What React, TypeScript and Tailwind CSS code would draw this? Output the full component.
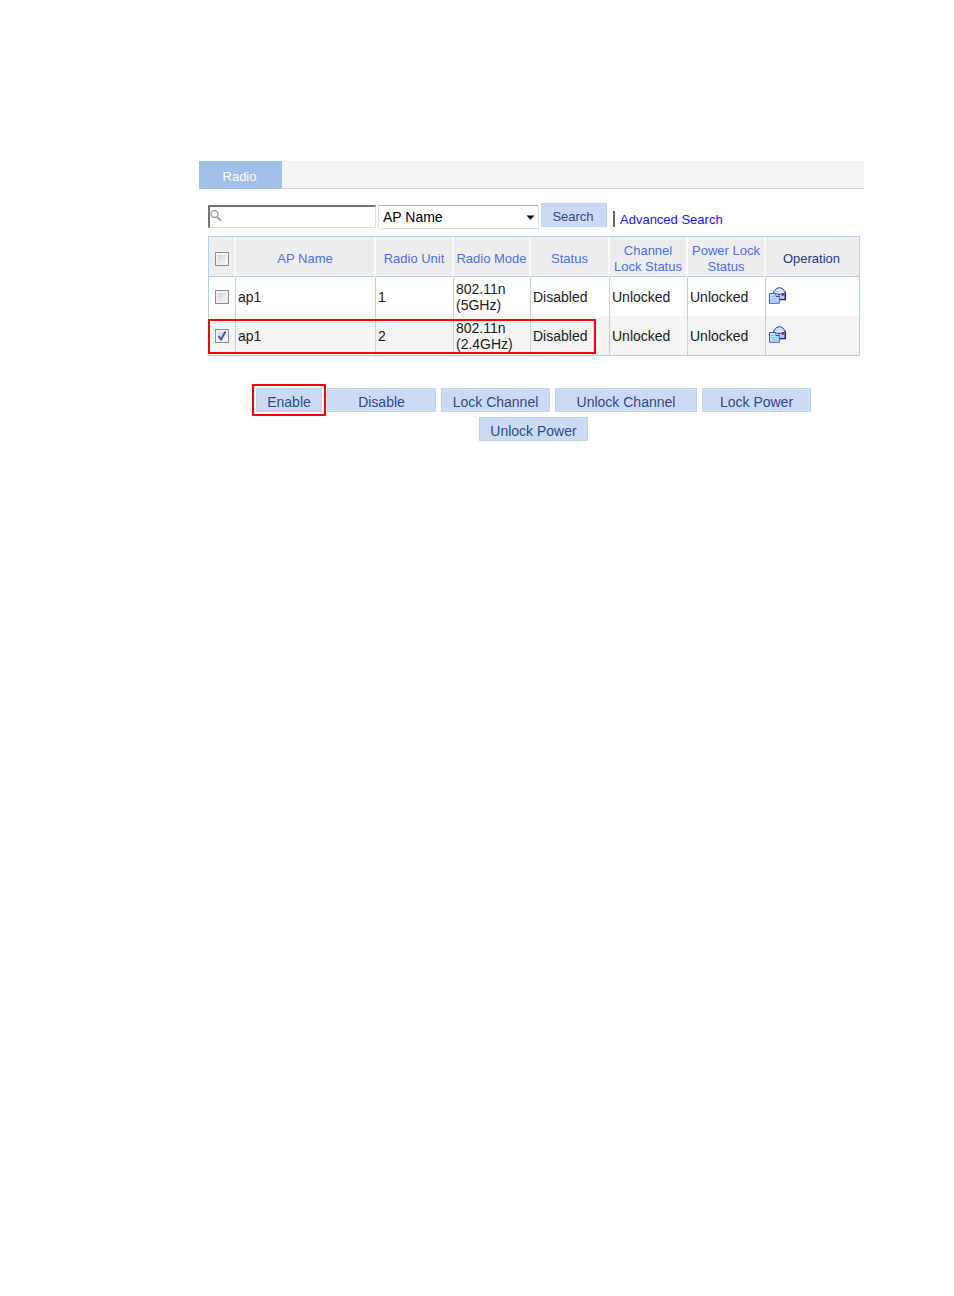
import React, { useState } from "react";

interface Radio {
  id: number;
  apName: string;
  unit: number;
  mode: string;
  band: string;
  status: string;
  channelLock: string;
  powerLock: string;
}

const radios: Radio[] = [
  {
    id: 1,
    apName: "ap1",
    unit: 1,
    mode: "802.11n",
    band: "(5GHz)",
    status: "Disabled",
    channelLock: "Unlocked",
    powerLock: "Unlocked",
  },
  {
    id: 2,
    apName: "ap1",
    unit: 2,
    mode: "802.11n",
    band: "(2.4GHz)",
    status: "Disabled",
    channelLock: "Unlocked",
    powerLock: "Unlocked",
  },
];

const actions = [
  { label: "Enable", width: "w-[66px]", marked: true },
  { label: "Disable", width: "w-[109px]" },
  { label: "Lock Channel", width: "w-[109px]" },
  { label: "Unlock Channel", width: "w-[142px]" },
  { label: "Lock Power", width: "w-[109px]" },
  { label: "Unlock Power", width: "w-[109px]" },
];

const SearchIcon = () => (
  <svg
    className="pointer-events-none absolute top-1 left-0.5"
    width="12"
    height="14"
    viewBox="0 0 12 14"
    fill="none"
    stroke="#a3a3a3"
  >
    <circle cx="4.5" cy="5" r="3.5" strokeWidth="1.4" />
    <path d="M7 7.8 L11 11.8" strokeWidth="2" />
  </svg>
);

// envelope with a sheet of paper in front of it
const OperationIcon = () => (
  <svg width="17" height="17" viewBox="0 0 17 17">
    <path
      d="M4.5 12.5 V5 L7.5 1.5 L10.5 0.6 L13.5 1.5 L16.3 5 V12.5 Z"
      fill="#a3cdf5"
      stroke="#3a48a8"
    />
    <path d="M16.3 5 V12.6 H10" fill="none" stroke="#241f80" strokeWidth="1.4" />
    <path d="M6 4.6 L8 2.4 L10.5 1.6 L13 2.4 L15 4.6 Z" fill="#d2eafa" />
    <path d="M6 5.5 H15" stroke="#e8f4ff" />
    <rect x="12.5" y="6" width="2.4" height="2.6" fill="#b0183c" />
    <path d="M7.5 7.5 H11.5" stroke="#2c3496" />
    <path
      d="M0.5 6.5 H7 L10.3 9.5 V16.3 H0.5 Z"
      fill="#c4e0fa"
      stroke="#4a5cb6"
    />
    <path d="M7 6.5 V9.5 H10.3" fill="#fff" stroke="#3a48a8" />
    <path d="M2 9.5 H5.5 M2 11.7 H8.5 M2 13.9 H8.5" stroke="#8bbcf0" />
  </svg>
);

interface CheckProps {
  label: string;
  checked: boolean;
  onChange: () => void;
}

const Check = ({ label, checked, onChange }: CheckProps) => (
  <span className="relative mx-auto block h-3.5 w-3.5">
    <input
      type="checkbox"
      aria-label={label}
      checked={checked}
      onChange={onChange}
      className="block h-3.5 w-3.5 appearance-none border border-[#8e8f8f] bg-linear-to-br from-[#c8ccd2] to-white shadow-[inset_0_0_0_2px_#f0f0f0]"
    />
    {checked && (
      <svg
        className="pointer-events-none absolute inset-0"
        width="14"
        height="14"
        viewBox="0 0 14 14"
        fill="none"
        stroke="#4257a0"
        strokeWidth="2"
      >
        <path d="M3.5 7 L6 10.5 L10.5 2.5" />
      </svg>
    )}
  </span>
);

const App = () => {
  const [query, setQuery] = useState("");
  const [field, setField] = useState("AP Name");
  const [selected, setSelected] = useState<number[]>([2]);

  const toggle = (id: number) =>
    setSelected(
      selected.includes(id)
        ? selected.filter((s) => s !== id)
        : [...selected, id],
    );
  const allSelected = selected.length === radios.length;
  const toggleAll = () =>
    setSelected(allSelected ? [] : radios.map((r) => r.id));

  const head =
    "border-r-2 border-b border-r-[#fafafa] border-b-[#b4cdec] p-0 pt-1 font-normal";
  const cell = "border-r border-[#cfcfcf] px-0.5 py-0";

  return (
    <div className="min-h-screen bg-white pt-[161px] pr-[90px] pl-[199px] font-['Liberation_Sans',Arial,sans-serif] text-[13px] leading-4 text-[#1a1a1a]">
      <div className="flex h-7 border-b border-[#d2d2d2] bg-[#f4f4f4]">
        <button className="-mb-px w-[83px] bg-[#a2bfe8] pt-1 pr-0.5 text-white">
          Radio
        </button>
      </div>

      <div className="pr-1 pl-[9px]">
        {/* Search bar */}
        <div className="mt-3.5 flex h-[25px] items-start">
          <div className="relative mt-0.5">
            <SearchIcon />
            <input
              type="text"
              aria-label="Search text"
              value={query}
              onChange={(e) => setQuery(e.target.value)}
              className="block h-[23px] w-[168px] border border-t-2 border-l-2 border-[#dedede] border-t-[#747474] border-l-[#747474] pl-4 outline-none"
            />
          </div>
          <div className="relative mt-0.5 ml-0.5">
            <select
              aria-label="Search field"
              value={field}
              onChange={(e) => setField(e.target.value)}
              className="block h-6 w-[161px] appearance-none rounded-xs border border-[#dcdcdc] border-t-[#ababab] bg-white pl-1 text-sm text-black outline-none"
            >
              <option>AP Name</option>
              <option>Radio Unit</option>
              <option>Radio Mode</option>
              <option>Status</option>
            </select>
            <svg
              className="pointer-events-none absolute top-2.5 right-1"
              width="9"
              height="5"
              viewBox="0 0 9 5"
            >
              <path d="M0.5 0.5 H8.5 L4.5 4.8 Z" fill="#000" />
            </svg>
          </div>
          <button className="ml-0.5 h-6 w-[66px] border border-[#bdd3f0] bg-[#ccdaf3] pt-1 pr-0.5 text-[#2f4a8c]">
            Search
          </button>
          <span className="mt-2 ml-1.5 h-4 w-0.5 bg-[#686070]" />
          <a href="#" className="mt-[9px] ml-[5px] text-[#1a12f0]">
            Advanced Search
          </a>
        </div>

        {/* Radio list */}
        <div className="relative mt-2">
          <table className="w-full table-fixed border-separate border-spacing-0 border border-[#b4cdec]">
            <colgroup>
              <col className="w-[27px]" />
              <col />
              <col className="w-[78px]" />
              <col className="w-[77px]" />
              <col className="w-[79px]" />
              <col className="w-[78px]" />
              <col className="w-[78px]" />
              <col className="w-[93px]" />
            </colgroup>
            <thead>
              <tr className="h-10 bg-[#ededed] text-[#4a70ec]">
                <th className={head}>
                  <Check
                    label="Select all"
                    checked={allSelected}
                    onChange={toggleAll}
                  />
                </th>
                <th className={head}>AP Name</th>
                <th className={head}>Radio Unit</th>
                <th className={head}>Radio Mode</th>
                <th className={head}>Status</th>
                <th className={head}>
                  Channel
                  <br />
                  Lock Status
                </th>
                <th className={head}>
                  Power Lock
                  <br />
                  Status
                </th>
                <th className="border-b border-[#b4cdec] p-0 pt-1 pr-0.5 font-normal text-[#243f80]">
                  Operation
                </th>
              </tr>
            </thead>
            <tbody className="text-sm leading-4">
              {radios.map((radio) => (
                <tr
                  key={radio.id}
                  className="h-[39px] bg-white even:bg-[#f4f4f4]"
                >
                  <td className="border-r border-[#cfcfcf] p-0">
                    <Check
                      label={`Select ${radio.apName} radio ${radio.unit}`}
                      checked={selected.includes(radio.id)}
                      onChange={() => toggle(radio.id)}
                    />
                  </td>
                  <td className={cell}>{radio.apName}</td>
                  <td className={cell}>{radio.unit}</td>
                  <td className={cell}>
                    {radio.mode}
                    <br />
                    {radio.band}
                  </td>
                  <td className={cell}>{radio.status}</td>
                  <td className={cell}>{radio.channelLock}</td>
                  <td className={cell}>{radio.powerLock}</td>
                  <td className="pt-0 pb-0.5 pl-[3px]">
                    <button
                      aria-label={`Edit ${radio.apName} radio ${radio.unit}`}
                      className="block"
                    >
                      <OperationIcon />
                    </button>
                  </td>
                </tr>
              ))}
            </tbody>
          </table>
          <div className="pointer-events-none absolute bottom-0.5 left-0 h-[35px] w-[388px] border-2 border-[#f80000]" />
        </div>

        {/* Actions */}
        <div className="mt-8 flex flex-wrap justify-center gap-[5px] pr-px">
          {actions.map((action) => (
            <div key={action.label} className="relative">
              <button
                className={`block h-6 border border-[#bdd3f0] bg-[#ccdaf3] pt-1 text-sm leading-4 text-[#2f4a8c] ${action.width}`}
              >
                {action.label}
              </button>
              {action.marked && (
                <div className="pointer-events-none absolute -inset-1 border-2 border-[#f80000]" />
              )}
            </div>
          ))}
        </div>
      </div>
    </div>
  );
};

export default App;
